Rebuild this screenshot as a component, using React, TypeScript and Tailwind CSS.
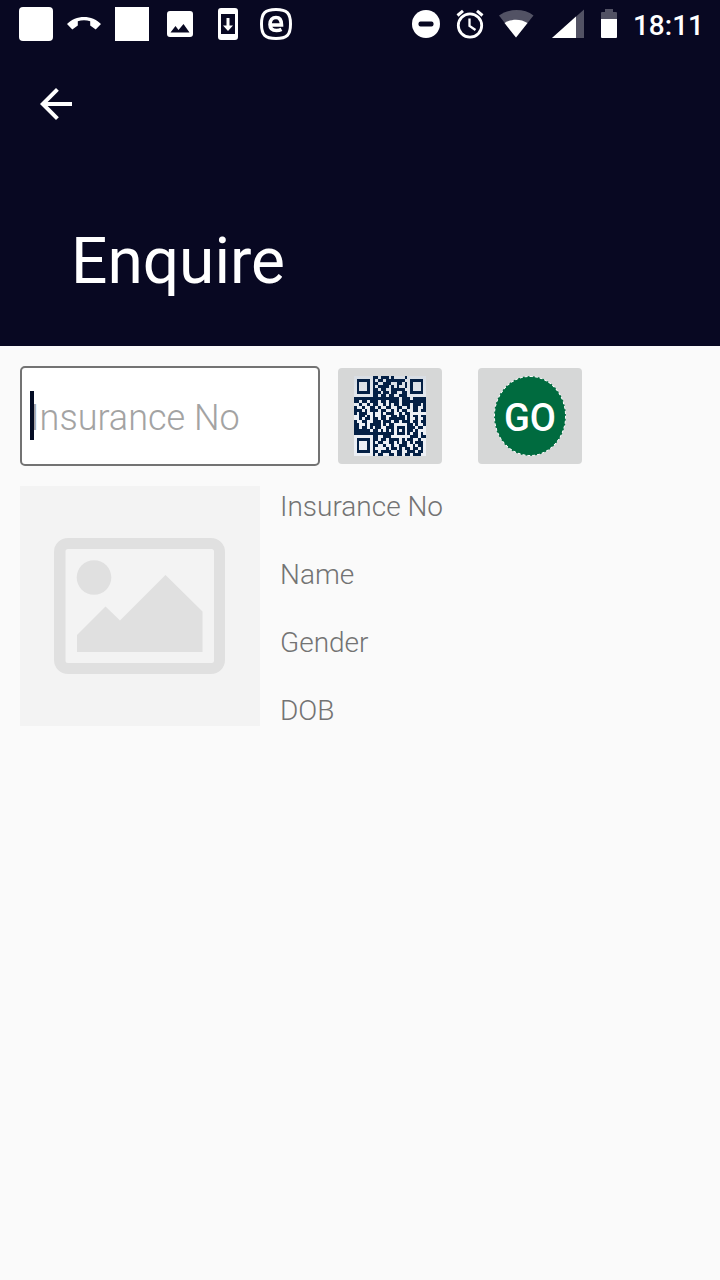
import React from "react";

const QR_ROWS = [
  ".......##.###.#....#.......",
  ".#####.#.##.#######..#####.",
  ".#...#.##..###..##.#.#...#.",
  ".#...#.#.####.#.#..#.#...#.",
  ".#...#.##.##..#####..#...#.",
  ".#####.###.##.##..##.#####.",
  ".......##.##.##..###.......",
  "#################.###.#####",
  "##.##.###.##.####.#########",
  "..#..#.##..#.#.##.###.###.#",
  "#..#..##.#..##..##..#.##..#",
  "###.#.###.##..#.#.##..##.##",
  "#.###..#..#.###..#.##......",
  "..##.#.#..##..##.##.#.##.##",
  "..#.##.##.##.######.#..#..#",
  "#..##..###.###.##.###.##.##",
  "##..#.####.#.##.....##.#..#",
  "##.##.#.##..###.###.###.##.",
  "######.##.#.#.#.#.#.##.#...",
  "###############.###.#.##.#.",
  ".......##..###.......###.##",
  ".#####.##.##.####.#.##..#..",
  ".#...#.#.##..##.#.##.#.###.",
  ".#...#.##..#..#..###..#.##.",
  ".#...#.#....#.##.#.##.##.#.",
  ".#####.##.####..##..###.##.",
  ".......#.##..##.##.##.###..",
];

const QR_PATH = QR_ROWS.map((row, y) =>
  [...row].map((c, x) => (c === "#" ? `M${x} ${y}h1v1h-1z` : "")).join(""),
).join("");

function QrCode() {
  return (
    <svg className="h-20 w-[72px]" viewBox="0 0 27 27" preserveAspectRatio="none" aria-hidden="true">
      <defs>
        <linearGradient id="qr-light" x1="0" y1="0" x2="0" y2="1">
          <stop offset="0" stopColor="#d8dde4" />
          <stop offset="0.5" stopColor="#eef1f6" />
          <stop offset="1" stopColor="#eceff5" />
        </linearGradient>
      </defs>
      <rect width="27" height="27" fill="url(#qr-light)" />
      <path d={QR_PATH} fill="#042045" shapeRendering="crispEdges" />
    </svg>
  );
}

function StatusBar() {
  return (
    <div className="flex h-12 items-center justify-between pr-4 pl-3 text-white">
      <div className="flex [&>svg]:h-12 [&>svg]:w-12" aria-hidden="true">
        <svg viewBox="0 0 48 48" fill="currentColor">
          <rect x="7" y="7" width="34" height="34" rx="4" />
        </svg>
        <svg viewBox="0 0 48 48" fill="currentColor">
          <path d="M24 17c-6.500 0-12.500 2.500-17 7l5.300 5.500 5.500-4v-4.300c4-1.200 8.400-1.200 12.400 0v4.300l5.500 4L41 24c-4.500-4.500-10.500-7-17-7z" />
        </svg>
        <svg viewBox="0 0 48 48" fill="currentColor">
          <rect x="7" y="7" width="34" height="34" />
        </svg>
        <svg viewBox="0 0 48 48" fill="currentColor" fillRule="evenodd">
          <path d="M14 11h20a3 3 0 0 1 3 3v20a3 3 0 0 1-3 3H14a3 3 0 0 1-3-3V14a3 3 0 0 1 3-3zM14.500 32.500h19l-6-8.500-5 6-3-4z" />
        </svg>
        <svg viewBox="0 0 48 48" fill="currentColor" fillRule="evenodd">
          <path d="M17 8h14a3 3 0 0 1 3 3v26a3 3 0 0 1-3 3H17a3 3 0 0 1-3-3V11a3 3 0 0 1 3-3zM17 14v20h14V14zM22.500 18h3v7.500H29L24 31l-5-5.500h3.500z" />
        </svg>
        <svg viewBox="0 0 48 48" fill="none" stroke="currentColor">
          <path d="M24 9.500c11 0 14.500 3.500 14.500 14.500S35 38.500 24 38.500 9.500 35 9.500 24 13 9.500 24 9.500z" strokeWidth="3" />
          <path d="M18.500 25h11c0-5-2-7.500-5.500-7.500s-6 2.500-6 7c0 4.300 2.300 6 6.500 6 2 0 3.500-.4 5-1.200" strokeWidth="3.600" />
        </svg>
      </div>
      <div className="flex items-center gap-4 [&>svg]:overflow-visible">
        <svg className="h-12 w-7" viewBox="0 0 28 48" aria-hidden="true">
          <circle cx="15" cy="24" r="14" fill="currentColor" />
          <rect x="7.500" y="21.500" width="15" height="5" rx="2" fill="#080822" />
        </svg>
        <svg className="h-12 w-7" viewBox="0 0 28 48" fill="none" stroke="currentColor" aria-hidden="true">
          <circle cx="15" cy="25.500" r="11.700" strokeWidth="2.800" />
          <path d="M2.500 15.500l5.500-4.700M27.500 15.500L22 10.800" strokeWidth="3" />
          <path d="M14.500 18.500v7.500l6 4" strokeWidth="2.300" />
        </svg>
        <svg className="h-12 w-[34px]" viewBox="0 0 34 48" fill="currentColor" aria-hidden="true">
          <path d="M0 15.500C9.500 8.300 25.500 8.300 34.500 15.500L17 37.500z" opacity=".3" />
          <path d="M5.500 23C12 18.500 22 18.500 28.500 23L17 37.500z" />
        </svg>
        <svg className="h-12 w-[34px]" viewBox="0 0 34 48" fill="currentColor" aria-hidden="true">
          <path d="M35 9.500V38H3z" opacity=".3" />
          <path d="M27 16.600V38H3z" />
        </svg>
        <svg className="h-12 w-[18px]" viewBox="0 0 18 48" fill="currentColor" aria-hidden="true">
          <path d="M6 9h8v3h3q1 0 1 1v6H2v-6q0-1 1-1h3z" opacity=".3" />
          <path d="M2 19h16v18q0 1-1 1H3q-1 0-1-1z" />
        </svg>
        <time className="pt-[3px] text-[28px] leading-8 font-medium">18:11</time>
      </div>
    </div>
  );
}

function PhotoPlaceholder() {
  return (
    <div className="size-60 shrink-0 bg-[#f3f3f3]">
      <svg className="size-full" viewBox="0 0 240 240" fill="#e0e0e0" role="img" aria-label="No photo">
        <path
          fillRule="evenodd"
          d="M48 52h143a14 14 0 0 1 14 14v108a14 14 0 0 1-14 14H48a14 14 0 0 1-14-14V66a14 14 0 0 1 14-14zM48 63a2.500 2.500 0 0 0-2.500 2.500v109A2.500 2.500 0 0 0 48 177h143.500a2.500 2.500 0 0 0 2.500-2.500v-109a2.500 2.500 0 0 0-2.500-2.500z"
        />
        <circle cx="74" cy="91.500" r="17.300" />
        <path d="M57 149l28.500-28.500L100 134.500 145.500 89l37 36.500V166H57z" />
      </svg>
    </div>
  );
}

export default function App() {
  return (
    <div className="min-h-screen bg-[#fafafa] font-['Roboto',sans-serif]">
      <header className="bg-[#080822] pb-11 text-white">
        <StatusBar />
        <div className="flex h-28 items-center px-8">
          <button type="button" aria-label="Back" className="size-12">
            <svg viewBox="0 0 48 48" className="size-12" fill="currentColor" aria-hidden="true">
              <path d="M40 22H15.660l11.180-11.180L24 8 8 24l16 16 2.820-2.820L15.660 26H40z" />
            </svg>
          </button>
        </div>
        <h1 className="pt-[62px] pl-[71px] text-[64px] leading-20">Enquire</h1>
      </header>

      <main className="p-5">
        <form className="flex items-center" onSubmit={(e) => e.preventDefault()}>
          <div className="relative w-[300px]">
            <input
              type="text"
              aria-label="Insurance No"
              placeholder="Insurance No"
              className="h-[100px] w-full rounded-[5px] border-2 border-[#737373] bg-white px-2 pt-1 text-4xl font-light outline-none placeholder:text-[#a3a3a3]"
            />
            <span className="absolute top-[25px] left-[10px] h-[49px] w-1 bg-[#040c24]" aria-hidden="true" />
          </div>
          <button type="button" aria-label="Scan QR code" className="ml-[18px] flex h-24 w-[104px] items-center justify-center rounded bg-[#d6d7d7]">
            <QrCode />
          </button>
          <button type="submit" className="ml-9 flex h-24 w-[104px] items-center justify-center rounded bg-[#d6d7d7]">
            <span className="flex h-20 w-[72px] items-center justify-center rounded-[50%] border border-dashed border-white bg-[#006b3f] pt-1 text-[38px] leading-10 font-medium text-white">
              GO
            </span>
          </button>
        </form>

        <section className="mt-5 flex gap-5">
          <PhotoPlaceholder />
          <ul className="flex flex-col gap-7 pt-px text-[28px] leading-10 font-light text-[#737373]">
            <li>Insurance No</li>
            <li>Name</li>
            <li>Gender</li>
            <li>DOB</li>
          </ul>
        </section>
      </main>
    </div>
  );
}
